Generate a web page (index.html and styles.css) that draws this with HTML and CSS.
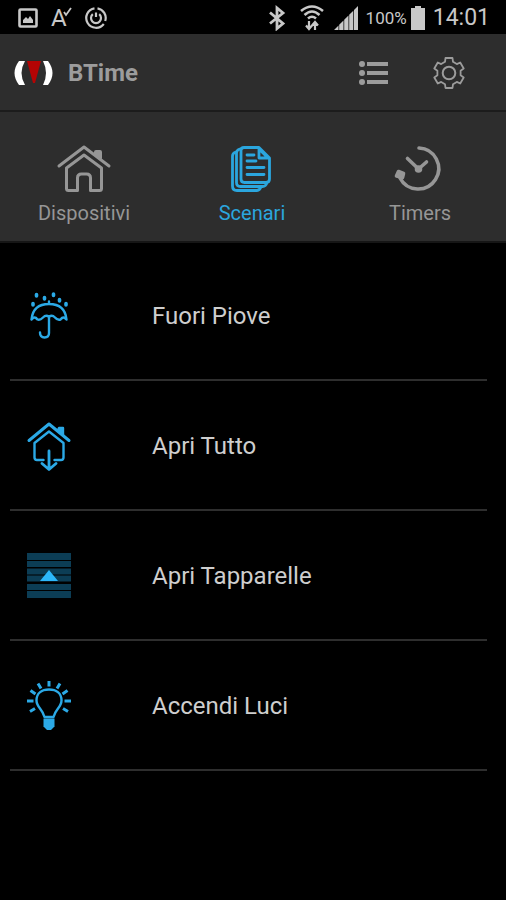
FILE: index.html
```html
<!DOCTYPE html>
<html lang="it">
<head>
<meta charset="utf-8">
<meta name="viewport" content="width=device-width, initial-scale=1">
<title>BTime</title>
<link rel="stylesheet" href="styles.css">
</head>
<body>
<div class="status">
  <div class="status-left">
    <svg width="20" height="20" viewBox="0 0 20 20" aria-hidden="true"><rect x="1.5" y="1.5" width="17" height="17" rx="1" fill="none" stroke="currentColor" stroke-width="2.6"/><path d="M5 15V12l3-3 2 2 2-3 3 4v3z" fill="currentColor"/></svg>
    <div class="status-spell"><span>A</span><svg width="9" height="10" viewBox="0 0 9 10" aria-hidden="true"><path d="M1 5l2 3L8 1" fill="none" stroke="currentColor" stroke-width="1.8"/></svg></div>
    <svg width="22" height="22" viewBox="0 0 22 22" fill="none" stroke="currentColor" stroke-width="2.2" aria-hidden="true"><path d="M12.5 1.3A9.8 9.8 0 0 1 20.2 14M18.8 17A9.8 9.8 0 1 1 9.5 1.3"/><path d="M7.8 7.2A5 5 0 1 0 14.2 7.2"/><path d="M11 5.5v4.500"/></svg>
  </div>
  <div class="status-right">
    <svg width="18" height="26" viewBox="0 0 18 26" fill="none" stroke="currentColor" stroke-width="2.8" aria-hidden="true"><path d="M2 7.5l13 11-6 5V3l6 5-13 10.500"/></svg>
    <svg class="wifi" width="24" height="26" viewBox="0 0 24 26" fill="none" stroke="currentColor" aria-hidden="true"><path d="M1 6Q12-3 23 6M4.500 10Q12 3 19.500 10M8 13.500Q12 10 16 13.500" stroke-width="2.600"/><path d="M9 16v8M6 20.500L9 24l3-3.500M15 25v-8M12 20.500l3-3.500 3 3.500" stroke-width="2.200"/></svg>
    <svg class="signal" width="24" height="24" viewBox="0 0 24 24" fill="currentColor" aria-hidden="true"><path d="M0 24l4.500-4.500V24zM5.200 24v-5.200l4.300-4.300V24zM10.200 24V13.800l4.300-4.300V24zM15.200 24V8.800l4.100-4.100V24zM20 24V4L24 0v24z"/></svg>
    <span class="percent">100%</span>
    <svg class="battery" width="14" height="24" viewBox="0 0 14 24" fill="currentColor" aria-hidden="true"><path d="M4 0h6v2h4v22H0V2h4z"/></svg>
    <time class="clock">14:01</time>
  </div>
</div>

<header class="bar">
  <svg width="40" height="24" viewBox="0 0 40 24" aria-hidden="true"><path d="M5 0h6Q4 12 11 24H5Q-4 12 5 0zM29 0h5q9 12 0 24h-5q6-12 0-24z" fill="#fff"/><path d="M13 0h14l-6 22h-2z" fill="#b40404"/></svg>
  <h1>BTime</h1>
  <div class="actions">
    <button type="button" aria-label="Elenco"><svg width="30" height="26" viewBox="0 0 30 26" fill="currentColor" aria-hidden="true"><circle cx="3" cy="4" r="3"/><circle cx="3" cy="13" r="3"/><circle cx="3" cy="22" r="3"/><path d="M8 2h21v4H8zM8 11h21v4H8zM8 20h21v4H8z"/></svg></button>
    <button type="button" aria-label="Impostazioni"><svg width="32" height="32" viewBox="0 0 32 32" fill="none" stroke="currentColor" stroke-width="1.8" stroke-linejoin="round" aria-hidden="true"><path d="M12.500 1h7l.5 3.800 3.800 2.300 3.400-1.600 3.500 6-3.100 2.200v4.600l3.100 2.200-3.500 6-3.400-1.600-3.800 2.300-.5 3.800h-7l-.5-3.800-3.800-2.300-3.400 1.600-3.500-6 3.100-2.200v-4.600l-3.100-2.200 3.500-6 3.400 1.600L12 4.800z"/><circle cx="16" cy="16" r="6.300" stroke-width="2"/></svg></button>
  </div>
</header>

<nav class="tabs">
  <a href="#dispositivi"><svg width="56" height="50" viewBox="0 0 56 50" fill="none" stroke="currentColor" stroke-width="3" stroke-linecap="round" stroke-linejoin="round" aria-hidden="true"><path d="M3 22L28 3 53 22"/><path d="M40 10.500V8h4v6z" fill="currentColor" stroke-width="4"/><path d="M10.500 24L28 11l17.500 13V44.500q0 2-2 2H34.500V34q0-4-4-4h-5q-4 0-4 4v12.500h-9q-2 0-2-2z"/></svg><span>Dispositivi</span></a>
  <a href="#scenari" class="active" aria-current="page"><svg width="56" height="50" viewBox="0 0 56 50" fill="none" stroke="currentColor" stroke-width="2.800" stroke-linejoin="round" stroke-linecap="round" aria-hidden="true"><path d="M12 8q-3.500 1-3.500 4v30q0 4.500 4.500 4.500h20q3 0 4-4"/><path d="M16 5q-3.500 1-3.500 4v29.500q0 4 4 4h22q3.500 0 4.500-4"/><path d="M20 3.500h15L45.500 14v21q0 3.500-3.500 3.500H20.500q-3.500 0-3.500-3.500V6.500q0-3 3-3z"/><path d="M35 5v9h9z" fill="#2d2d2d"/><path d="M23 11h7M23 17h9M23 23.500h17M23 30.500h17"/></svg><span>Scenari</span></a>
  <a href="#timers"><svg width="56" height="50" viewBox="0 0 56 50" fill="none" stroke="currentColor" stroke-width="3.600" stroke-linecap="round" stroke-linejoin="round" aria-hidden="true"><path d="M27 4A20.500 20.500 0 1 1 8 34"/><path d="M15.500 14.500l11 10.500 8-7"/><circle cx="26.500" cy="25" r="2" fill="currentColor"/><path d="M4.500 32l2-4.500 5 2-1 4z" fill="currentColor"/></svg><span>Timers</span></a>
</nav>

<main>
  <ul class="scenes">
    <li><button type="button"><svg width="50" height="50" viewBox="0 0 50 50" fill="none" stroke="currentColor" stroke-width="2.400" stroke-linecap="round" stroke-linejoin="round" aria-hidden="true"><path d="M25 10.500V13M7.500 28.500Q9 13 25 13t17.500 15.500q-3-4-6 0-3 1-5.500-2-3-3-6-.5-3-2.500-6 .5-3 3-5.500 2-3-4-6 0zM25 27v15q0 4.500-4.500 4.500T16 41.500"/><path d="M12.500 3.500v1.500M20.500 6.500v1.500M29.500 3v1.500M35.500 8.500v1.500M9 12.500V14M42 12.500V14" stroke-width="3.600"/></svg><span>Fuori Piove</span></button></li>
    <li><button type="button"><svg width="50" height="50" viewBox="0 0 50 50" fill="none" stroke="currentColor" stroke-width="2.400" stroke-linecap="round" stroke-linejoin="round" aria-hidden="true"><path d="M5 19.500L25 3l20 16.500" stroke-width="3"/><path d="M34 9l1-2h4v7z" fill="currentColor"/><path d="M19.500 39H13q-2.500 0-2.500-2.500V22L25 10.500 39.500 22v14.500q0 2.500-2.500 2.500h-6.500"/><path d="M25 30v18M18 42.500l7 6 7-6" stroke-width="2.800"/></svg><span>Apri Tutto</span></button></li>
    <li><button type="button"><svg width="50" height="50" viewBox="0 0 50 50" aria-hidden="true"><path d="M3 2h44v7H3zM3 10h44v6H3zM3 17.500h44v6H3zM3 24.500h44v6H3zM3 33h44v6H3zM3 40h44v7H3z" fill="#0c3d55"/><path d="M25 19l9 11H16z" fill="#2cb7fa"/></svg><span>Apri Tapparelle</span></button></li>
    <li><button type="button"><svg width="50" height="50" viewBox="0 0 50 50" fill="none" stroke="currentColor" stroke-width="3" stroke-linejoin="round" aria-hidden="true"><path d="M20.500 36q-1-4-4.500-8.500Q12.500 23 12.500 19.500C12.500 12 18 8.500 25 8.500s12.500 3.500 12.500 11q0 3.500-3.500 8-3.500 4.500-4.500 8.500z" stroke-width="2.400"/><path d="M19.500 37.500h11v8L27 49h-4l-3.500-3.500z" fill="currentColor" stroke="none"/><path d="M25 0v5.500M14 2.500l3 5M36 2.500l-3 5M6.500 9.500l5 3.500M43.500 9.500l-5 3.500M3 20h6.500M47 20h-6.500M6 30.500l5-3M44 30.500l-5-3"/></svg><span>Accendi Luci</span></button></li>
  </ul>
</main>
</body>
</html>
```
FILE: styles.css
```css
* { box-sizing: border-box; }

body {
  margin: 0;
  background: #000;
  color: #cecece;
  font-family: Roboto, "Liberation Sans", sans-serif;
}

svg { display: block; flex: none; }

button {
  border: 0;
  background: none;
  color: inherit;
  font: inherit;
  padding: 0;
  cursor: pointer;
}

.status {
  display: flex;
  justify-content: space-between;
  align-items: center;
  height: 34px;
  padding: 0 16px 0 18px;
  color: #c8c8c8;
}

.status-left,
.status-right {
  display: flex;
  align-items: center;
  height: 34px;
  padding-top: 2px;
}

.status-left { gap: 13px; }

.status-spell {
  display: flex;
  font-size: 24px;
  line-height: 28px;
}

.status-spell svg { margin: 3px 0 0 -4px; }

.status-right { gap: 8px; }

.wifi { margin: 0 2px 0 6px; }

.percent { font-size: 17px; }

.battery { margin-left: -4px; }

.clock {
  font-size: 23px;
  line-height: 32px;
}

.bar {
  display: flex;
  align-items: center;
  height: 78px;
  padding: 2px 41px 0 14px;
  background: #2d2d2d;
  border-bottom: 2px solid #1c1c1c;
  color: #9c9c9c;
}

.bar h1 {
  margin: 0 0 0 14px;
  font-size: 24px;
  font-weight: 700;
}

.actions {
  display: flex;
  align-items: center;
  gap: 44px;
  margin-left: auto;
}

.tabs {
  display: grid;
  grid-template-columns: repeat(3, 1fr);
  background: #2d2d2d;
  padding: 32px 2px 15px 0;
  border-bottom: 2px solid #161616;
}

.tabs a {
  display: flex;
  flex-direction: column;
  align-items: center;
  gap: 6px;
  color: #969696;
  font-size: 20px;
  line-height: 26px;
  text-decoration: none;
}

.tabs .active { color: #2ba6de; }

.scenes {
  margin: 0;
  padding: 8px 19px 0 10px;
  list-style: none;
}

.scenes li { border-bottom: 2px solid #2e2e2e; }

.scenes button {
  display: flex;
  align-items: center;
  gap: 78px;
  width: 100%;
  height: 128px;
  padding: 2px 0 0 14px;
  font-size: 24px;
  text-align: left;
}

.scenes svg { color: #2ba9e6; }
```
